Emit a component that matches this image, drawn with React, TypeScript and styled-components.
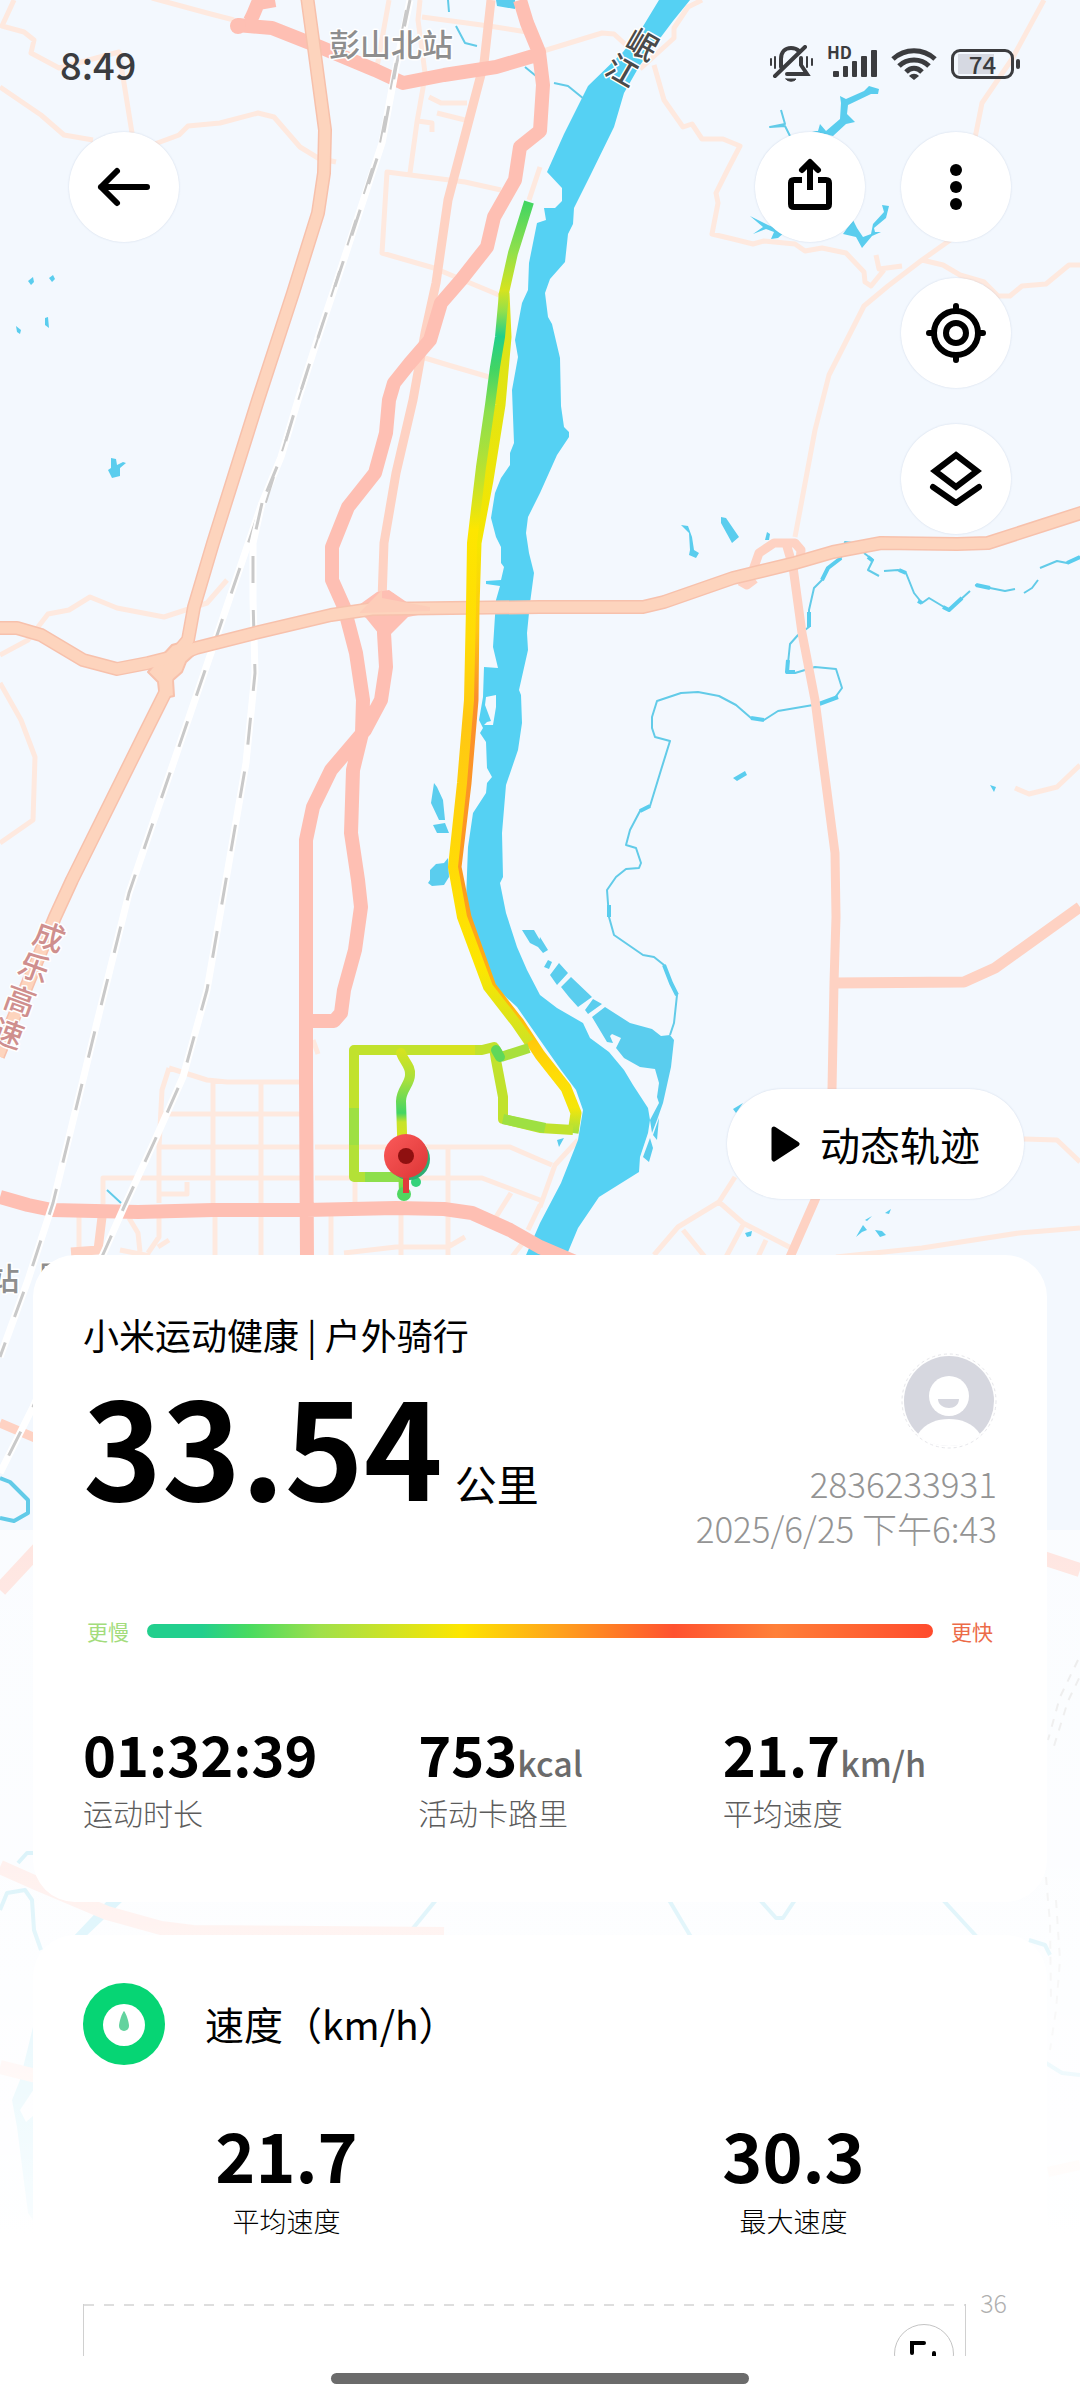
/* -------------------------------------------------------------------------- */
/*                            External Dependencies                           */
/* -------------------------------------------------------------------------- */
import React from 'react';
import styled, { createGlobalStyle } from 'styled-components';

/* -------------------------------- Map data -------------------------------- */
const minorRoads = [
  'M14 0L2 26L24 32L34 40L31 53L59 68L100 57L119 52L132 133',
  'M0 87L41 115L64 135L93 140',
  'M152 145L179 135L188 126L220 123L258 113L274 117L300 147L318 158L336 162',
  'M152 -2L207 13L234 20',
  'M389 0L377 67M420 0L418 20L425 73L423 88L417 122L410 173',
  'M422 17L489 26L527 32M429 97L441 103L467 103M437 113L465 120M418 121L432 123V132',
  'M501 190L465 182L387 172L382 253L434 268L499 295',
  'M425 358L448 365L489 377M540 167L529 200',
  'M227 580L207 603L164 617L117 608L90 597L69 610L48 614L28 640L0 655',
  'M0 683L21 720L35 757L33 820L0 843',
  'M795 537L815 430L829 375L864 306L888 286L922 260L953 238L976 133L982 103L1012 59L1044 0',
  'M922 260L943 265L960 275L984 282L998 296H1010L1022 286L1046 284L1069 265H1080',
  'M876 255L879 269L902 266',
  'M654 65L664 100L683 127L692 124L702 139H723L740 146L728 169L716 193L718 203L712 234L733 239L753 244L764 241L795 244L805 251L822 248L846 253L864 272L865 282L871 286L884 270',
  'M540 52L602 33L614 34L626 45M702 0L688 7L674 28V38L640 69',
  'M1015 788L1029 794L1057 787L1080 765',
  'M169 1068L207 1080L227 1082H300M169 1068L162 1090L159 1147V1203',
  'M159 1114H300M159 1147H300M103 1204V1178H300M213 1080V1203M261 1082V1203',
  'M160 1194H187V1182M315 1147H510L540 1160M315 1178H482L540 1200',
  'M355 1182V1203M448 1147V1203M511 1193L496 1217M540 1205L528 1230M313 1040L318 1054',
  'M79 1217V1250M129 1218L138 1233L140 1252M159 1217V1237L148 1253M169 1240L158 1247',
  'M215 1217V1255M261 1217V1255M331 1215V1255M401 1215V1255M448 1215V1255',
  'M344 1253L396 1247H448L465 1237M120 1250L150 1256',
  'M578 1140L555 1165L540 1207M540 1160L552 1165',
  'M735 1177L719 1202L678 1227L654 1255M719 1202L743 1223L795 1250',
  'M743 1225L726 1257M766 1240L758 1257M683 1230L705 1257M525 1240L512 1257',
  'M836 1257L922 1248L1019 1233L1080 1228M1024 1139L1057 1140L1080 1162',
];

const midRoads =
  'M491 0L484 63L463 143L448 200L436 283L425 333L413 400L396 473L384 543L382 600' +
  'M753 570L759 553L774 543H795L801 550L800 562M786 543L793 567L802 633L815 700L835 853L836 917L834 983L832 1090L830 1160L815 1200L790 1257' +
  'M740 581L747 585L755 579M102 1217L98 1250L71 1252M0 1423L40 1440';

const primaryRoads =
  'M275 0L258 3L253 15L250 21M237 25L272 28L320 47L375 70L403 83L444 75L496 67L540 54' +
  'M520 0L527 23L539 52L543 85L540 131L520 147L515 180L494 217L487 247L461 280L441 303L430 340L410 363L394 383L389 400L386 433L375 473L348 507L332 547V580L344 607L356 653L363 700L362 733L353 770L351 833L358 880L361 907L355 950L344 990L341 1013L334 1021H310' +
  'M387 593L384 633L386 667L381 700L365 730L331 770L313 807L306 840V1080L307 1260' +
  'M0 1197L28 1205L52 1210L138 1212L213 1210H306L396 1208L444 1209L472 1213L510 1230L540 1247L575 1262' +
  'M40 1547L0 1590M1040 1557L1080 1570M0 1867L36 1883L107 1913L161 1928L193 1932L444 1934M0 2067L40 2077';

const expressways = [
  'M307 -4L313 40L325 130L324 173L318 213L293 293L258 400L213 543L194 607L188 640L169 663L165 693L145 733L72 880L55 917L-2 1056',
  'M-4 628H17L41 635L83 660L117 669L148 663L172 657L196 648L255 633L331 615L372 609L540 607H643L664 602L733 578L795 563L833 552L881 543L957 544L988 543L1084 512',
];

const railways = [
  'M410 0L396 67L382 143L348 247L313 353L298 400L281 457L262 503L213 647L172 767L129 893L100 1010L53 1203L28 1280L0 1357',
  'M262 503L253 543V600L255 673L246 763L226 880L207 990L183 1077L155 1140L124 1207L105 1250L33 1407L0 1473',
];

const fadedRailways =
  'M1078 1660L1060 1697L1048 1740M1086 1664L1068 1701L1054 1746M1046 1877L1050 1923L1051 2000M1056 1900L1060 1960L1056 2010L1050 2050';

const river =
  'M659 0L642 28L623 52L588 86L564 134L547 172L562 188V201L555 208H544L546 220L537 223L529 263L528 290L522 303L515 340L518 357L512 390L514 443L510 453V465L501 478L495 493L491 518L496 537L501 547V563L504 567L501 580L486 581V584L500 586L496 600L493 647L498 668L484 667L483 697L479 720L483 728L480 733L486 742L487 768L492 777L487 783L486 793L473 813L468 847L466 900L468 917L480 953L495 987L517 1007L540 1040L561 1070L576 1090L583 1110L578 1140L561 1183L540 1223L523 1262' +
  'L565 1262L568 1252L578 1228L599 1197L639 1172L640 1157L648 1133L650 1120L648 1108L633 1085L624 1070L609 1052L590 1038L583 1023L557 1008L540 995L527 970L517 947L506 913L500 883L503 877L502 833L506 785L518 750L522 723L521 695L519 690L528 650L527 633L530 603L534 573L529 553L526 533L528 517L540 493L557 455L569 437V432L564 427L561 406L560 358L552 324L548 317L545 293L550 279L565 262L568 234L573 224L574 208L590 176L614 127L624 93L640 65L673 21L690 0Z' +
  'M486 697L496 695V707L493 725H484L487 722L491 721L485 705Z';

const ponds =
  'M496 0L497 6L515 9V0ZM28 281L33 277L34 282L31 285ZM49 278L53 275L55 279L52 282ZM16 326L21 330L20 334L17 332ZM45 318L48 317L49 328L45 325Z' +
  'M111 458L116 459L117 465L123 462L126 463L120 468V476L112 478L108 470L111 468Z' +
  'M434 783L437 787L443 800L445 820H439L431 803ZM433 825L445 823L449 833H437ZM448 858L444 863L436 864L430 870V880L428 883L432 886L444 885L449 877Z' +
  'M879 89L869 86L864 91L846 99L840 96L841 103L840 119L826 131L820 124L818 131L812 131L833 136L846 124L855 122L847 114L848 105L871 94H878Z' +
  'M853 220L843 234L856 237L862 248L872 236L881 232L875 232L874 228L886 218L889 206L882 205L884 212L873 224L871 234L863 237L857 228Z' +
  'M750 216L768 225L785 232L778 238L771 239L774 232L766 229L753 234L763 227Z' +
  'M681 525L688 526L692 537L694 550L699 553L696 558L689 555L690 550L689 533ZM721 517L726 518L739 537L732 543L721 523ZM767 532L770 534L769 540H765Z' +
  'M733 778L745 771L747 775L737 781ZM990 785L996 787L994 792ZM522 930L534 930L541 942L538 947L530 943ZM540 937L548 950L543 953L538 947ZM548 960L552 962L549 969L544 967Z' +
  'M559 963L568 973L557 985L550 975ZM571 977L592 997L578 1007L569 997L561 987ZM593 999L602 1004L588 1014L585 1010Z' +
  'M605 1007L630 1023L652 1029L661 1036L670 1035L674 1040L671 1067L663 1103L657 1120L652 1133L650 1120L659 1103L657 1097L659 1083L655 1069L640 1067L624 1058L616 1048L621 1038L612 1034L610 1036L613 1043L607 1042L592 1017Z' +
  'M659 1118L657 1140L653 1135ZM650 1138L653 1148L649 1162L643 1157ZM557 1140L564 1138L559 1147Z' +
  'M733 1109L743 1103L736 1113ZM745 1233L752 1231L751 1236L747 1237ZM885 1213L891 1209L889 1214ZM875 1230L882 1231L886 1235L880 1237ZM863 1225L867 1230L862 1232L856 1237L860 1230ZM865 1220L872 1216L867 1221Z' +
  'M108 1900H124L82 1940H70ZM33 2027L20 2080L12 2100L17 2127L28 2213L40 2230V2110L26 2122L20 2110L40 2080V2020Z';

const streams =
  'M448 0L449 12M456 26L465 43L477 46M525 67L536 76M554 83L568 86L584 99M781 110L785 124L770 127L785 126L790 136M107 1190L121 1203' +
  'M853 543L845 542L841 558L828 568L822 580L814 588L809 610V627L798 635L790 644L787 673H795L815 667L836 669L842 688L834 699L819 704L778 711L764 720L751 718L736 705L719 696L698 692L681 693L657 701L652 717V728L655 737L670 741L661 770L650 806L640 811L630 830L626 845L636 848L641 863L639 868L626 869L616 877L607 890L609 917L614 935L643 955L654 957L664 965L671 983L677 995L674 1023L670 1035' +
  'M864 553L873 560L868 570L879 576M884 571L898 570L906 573L914 593L922 603L929 598L949 610L970 591M975 585L1005 591L1015 589M1024 593L1032 588L1038 580M1040 568L1057 561L1067 563L1080 557';

/* The same streams swell where the water is wider */
const wideStreams =
  'M841 558L828 568L822 580M809 612V627M788 660L787 672H795M838 697L819 704M764 720L751 718M650 806L640 811M609 905L609 917M664 965L671 983L677 995M868 557L873 561M899 570L906 573M918 601L922 603M943 607L949 610L962 598M976 585L990 588M1067 563L1080 557';

const lowerStreams =
  'M0 1478L10 1482L28 1500V1513L14 1521L0 1518M18 1863L27 1853H36M0 1910L7 1893L25 1890L32 1900L34 1930L41 1950' +
  'M669 1900L691 1937M760 1900L776 1918H783L795 1900M943 1900L977 1937M436 1900L410 1932M1029 1940L1045 1945L1050 1955M1046 2063L1062 2073L1080 2075';

const trackOut =
  'M529 202L513 253L504 293L500 337L495 367L490 405L481 467L472 543L471 607L469 700L462 783L453 867L462 917L488 987L516 1023L529 1042';
const trackBack =
  'M504 293L506 337L500 405L488 480L476 543L474 607L473 700L466 783L456 867L466 917L491 987L519 1023L540 1055L566 1088L576 1113L573 1133';

const Map = () => (
  <MapCanvas viewBox="0 0 1080 2400" preserveAspectRatio="xMidYMin slice" aria-hidden="true">
    <defs>
      <linearGradient id="out" gradientUnits="userSpaceOnUse" x1="0" y1="202" x2="0" y2="1042">
        <stop offset="0" stopColor="#41d562" />
        <stop offset=".06" stopColor="#92e04b" />
        <stop offset=".105" stopColor="#d6e31f" />
        <stop offset=".13" stopColor="#92e04b" />
        <stop offset=".16" stopColor="#22cf8a" />
        <stop offset=".2" stopColor="#43d563" />
        <stop offset=".25" stopColor="#8ddf4c" />
        <stop offset=".33" stopColor="#bfe22e" />
        <stop offset=".39" stopColor="#fde600" />
        <stop offset=".52" stopColor="#ffdc06" />
        <stop offset=".62" stopColor="#ffc713" />
        <stop offset=".8" stopColor="#ffdc06" />
        <stop offset=".91" stopColor="#fde600" />
        <stop offset="1" stopColor="#d0e322" />
      </linearGradient>
      <linearGradient id="back" gradientUnits="userSpaceOnUse" x1="0" y1="293" x2="0" y2="1133">
        <stop offset="0" stopColor="#d6e31f" />
        <stop offset=".3" stopColor="#f6e600" />
        <stop offset=".4" stopColor="#ffc713" />
        <stop offset=".48" stopColor="#fb8f2c" />
        <stop offset=".7" stopColor="#fd9a20" />
        <stop offset=".85" stopColor="#ffb60f" />
        <stop offset=".93" stopColor="#ffdc06" />
        <stop offset=".97" stopColor="#f5e60a" />
        <stop offset="1" stopColor="#a3e03f" />
      </linearGradient>
      <linearGradient id="spur" gradientUnits="userSpaceOnUse" x1="0" y1="1050" x2="0" y2="1200">
        <stop offset="0" stopColor="#d6e31f" />
        <stop offset=".2" stopColor="#a8e03c" />
        <stop offset=".42" stopColor="#43d563" />
        <stop offset=".48" stopColor="#c7e32a" />
        <stop offset=".7" stopColor="#e6e514" />
        <stop offset="1" stopColor="#43d563" />
      </linearGradient>
      <linearGradient id="pin" x1="0" y1="0" x2="1" y2="1">
        <stop offset="0" stopColor="#fb5a5a" />
        <stop offset="1" stopColor="#dd3636" />
      </linearGradient>
      <linearGradient id="fade" x1="0" y1="0" x2="0" y2="1">
        <stop offset="0" stopColor="#fff" stopOpacity=".6" />
        <stop offset=".42" stopColor="#fff" stopOpacity=".76" />
        <stop offset=".7" stopColor="#fff" stopOpacity=".88" />
        <stop offset=".97" stopColor="#fff" stopOpacity=".95" />
        <stop offset="1" stopColor="#fff" />
      </linearGradient>
    </defs>
    <rect width="1080" height="2400" fill="#f3f8fe" />

    <g fill="none" strokeLinejoin="round">
      <path d={minorRoads.join('')} stroke="#fee9df" strokeWidth="5" />
      <path d={river} fill="#55d1f3" fillRule="evenodd" />
      <path d={ponds} fill="#5acdee" />
      <path d={streams} stroke="#62cbe8" strokeWidth="2" />
      <path d={wideStreams} stroke="#5acdee" strokeWidth="4" />
      <path d={lowerStreams} stroke="#62cbe8" strokeWidth="4" />
      <path d={midRoads} stroke="#fed2c3" strokeWidth="9" />
      <path d="M834 983L964 982L995 968L1080 907" stroke="#fed2c3" strokeWidth="11" />
      <path d={primaryRoads} stroke="#febfb3" strokeWidth="14" />
      <circle cx="238" cy="26" r="8" fill="#febfb3" />
      <path d="M352 610L377 592L389 590L408 603L428 607V613L408 617L391 634H379L366 618Z" fill="#febfb3" />
      {railways.map((d) => (
        <g key={d}>
          <path d={d} stroke="#fff" strokeWidth="7" />
          <path d={d} stroke="#c9c9c9" strokeWidth="3" strokeDasharray="27 27" />
        </g>
      ))}
      <path d="M406 10L380 143L296 407L262 515" stroke="#c9c9c9" strokeWidth="2" strokeDasharray="27 27" />
      <path d={fadedRailways} stroke="#c9c9c9" strokeWidth="2" strokeDasharray="8 8" />
      {expressways.map((d) => (
        <path key={d} d={d} stroke="#f7c1ac" strokeWidth="14" />
      ))}
      <path d="M162 656L172 645L190 640L197 652L186 662L182 672L173 680L174 696L160 699L158 682L148 672Z" fill="#fdd4bd" stroke="#f7c1ac" strokeWidth="2" />
      {expressways.map((d) => (
        <path key={d} d={d} stroke="#fdd4bd" strokeWidth="11" />
      ))}
      <path d="M360 612L382 590V598L430 607V611L360 613Z" fill="#fdcdb9" />
      <path d="M1048 2172L1080 2165" stroke="#fdd4bd" strokeWidth="10" />
    </g>

    <g fill="none" strokeWidth="10" strokeLinejoin="round">
      <path d={trackBack} stroke="url(#back)" strokeWidth="11" />
      <path d={trackOut} stroke="url(#out)" />
      <path d="M573 1130L540 1128L503 1119V1097L496 1060L494 1048" stroke="#c1e22d" />
      <path d="M503 1119L545 1128" stroke="#9ee042" />
      <path d="M529 1048L501 1057" stroke="#a8e03c" />
      <path d="M501 1058L494 1047L482 1050H354V1110" stroke="#c1e22d" />
      <path d="M500 1057L496 1050" stroke="#5fd85a" strokeLinecap="round" />
      <path d="M430 1050H475" stroke="#d6e31f" />
      <path d="M354 1108V1150" stroke="#9ee042" />
      <path d="M354 1145V1177H401" stroke="#b3e137" />
      <path d="M365 1177H404" stroke="#8ddf4c" />
      <path d="M401 1053C404 1062 411 1066 410 1075C410 1084 401 1090 401 1101L402 1133L404 1194" stroke="url(#spur)" strokeLinecap="round" />
      <circle cx="404" cy="1194" r="7" fill="#4fd760" />
      <circle cx="416" cy="1182" r="5" fill="#35d27c" />
    </g>
    <circle cx="409" cy="1159" r="21" fill="#2fae74" />
    <path d="M406 1174V1193" stroke="#e03c3c" strokeWidth="6" />
    <circle cx="406" cy="1156" r="22" fill="url(#pin)" />
    <circle cx="406" cy="1156" r="8" fill="#8f1010" />

    <MapLabel x="391" y="56">彭山北站</MapLabel>
    <MapLabel $color="#4a4a4a" transform="translate(642 45) rotate(30)" y="11">岷</MapLabel>
    <MapLabel $color="#4a4a4a" transform="translate(622 71) rotate(30)" y="11">江</MapLabel>
    <MapLabel $color="#cf8f8e" transform="translate(49 937) rotate(20)" y="11">成</MapLabel>
    <MapLabel $color="#cf8f8e" transform="translate(34 968) rotate(20)" y="11">乐</MapLabel>
    <MapLabel $color="#cf8f8e" transform="translate(20 1001) rotate(20)" y="11">高</MapLabel>
    <MapLabel $color="#cf8f8e" transform="translate(8 1034) rotate(20)" y="11">速</MapLabel>
    <MapLabel x="4" y="1290">站</MapLabel>
    <MapLabel x="53" y="1288">眉</MapLabel>

    <rect y="1530" width="1080" height="704" fill="url(#fade)" />
    <rect y="2234" width="1080" height="166" fill="#fff" />
  </MapCanvas>
);

/* ---------------------------------- Icons --------------------------------- */
const MutedBell = () => (
  <svg width="44" height="38" viewBox="0 0 44 38" fill="none" stroke="#3b3c3f" strokeWidth="4" strokeLinecap="round">
    <path d="M12 22V14C12 7 16 3 22 3C25 3 28 4 30 6M32 13V20L38 29H18" />
    <path d="M36 2L6 31" />
    <path d="M2 14V20M6 12V23M38 12V22M43 14V20" strokeWidth="2" />
    <path d="M17 34H27C25 37 19 37 17 34Z" fill="#3b3c3f" strokeWidth="1" />
  </svg>
);

const SignalBars = () => (
  <svg width="44" height="28" viewBox="0 0 44 28" fill="#3b3c3f">
    <rect x="0" y="21" width="6" height="6" rx="1" />
    <rect x="10" y="16" width="5" height="11" rx="1" />
    <rect x="19" y="11" width="5" height="16" rx="1" />
    <rect x="28" y="6" width="6" height="21" rx="1" />
    <rect x="38" y="0" width="6" height="27" rx="1" />
  </svg>
);

const Wifi = () => (
  <svg width="46" height="34" viewBox="0 0 46 34" fill="none" stroke="#3b3c3f" strokeWidth="5">
    <path d="M2 12C14 1 32 1 44 12" />
    <path d="M8 19C16 11 30 11 38 19" />
    <path d="M15 25C20 20 26 20 31 25" />
    <path d="M18 29C21 26 25 26 28 29L23 33Z" fill="#3b3c3f" stroke="none" />
  </svg>
);

const BackIcon = () => (
  <svg width="56" height="44" viewBox="0 0 56 44" fill="none" stroke="#000" strokeWidth="6" strokeLinecap="round" strokeLinejoin="round">
    <path d="M51 22H5M21 6L5 22L21 38" />
  </svg>
);

const ShareIcon = () => (
  <svg width="60" height="60" viewBox="0 0 60 60" fill="none" stroke="#000" strokeWidth="6">
    <path d="M22 23H14Q11 23 11 26V47Q11 50 14 50H46Q49 50 49 47V26Q49 23 46 23H38" />
    <path d="M30 33V5" />
    <path d="M22 13L30 5L38 13" strokeLinecap="round" strokeLinejoin="round" />
  </svg>
);

const MoreIcon = () => (
  <svg width="12" height="46" viewBox="0 0 12 46">
    <circle cx="6" cy="6" r="6" />
    <circle cx="6" cy="23" r="6" />
    <circle cx="6" cy="40" r="6" />
  </svg>
);

const LocateIcon = () => (
  <svg width="60" height="60" viewBox="0 0 60 60" fill="none" stroke="#000" strokeWidth="6">
    <circle cx="30" cy="30" r="22" />
    <circle cx="30" cy="30" r="10" />
    <path d="M30 3V8M30 52V57M3 30H8M52 30H57" strokeLinecap="round" />
  </svg>
);

const LayersIcon = () => (
  <svg width="56" height="60" viewBox="0 0 56 60" fill="none" stroke="#000" strokeWidth="6">
    <path d="M28 6L49 22L28 38L7 22Z" />
    <path d="M5 38L28 54L51 38" strokeLinecap="round" strokeLinejoin="round" />
  </svg>
);

const PlayIcon = () => (
  <svg width="29" height="36" viewBox="0 0 29 36">
    <path d="M3 3L26 18L3 33Z" stroke="#000" strokeWidth="5" strokeLinejoin="round" />
  </svg>
);

const AvatarIcon = () => (
  <svg width="96" height="96" viewBox="0 0 96 96">
    <circle cx="48" cy="48" r="47" fill="#fff" stroke="#e6e6ea" strokeDasharray="3 3" />
    <circle cx="48" cy="48" r="45" fill="#d6d7df" />
    <path d="M17 81C24 70 36 66 48 66S72 70 79 81C72 89 60 93 48 93S24 89 17 81Z" fill="#fff" />
    <circle cx="48" cy="43" r="20" fill="#fff" />
    <path d="M37 46H58C58 52 53 55 48 55S37 52 37 46Z" fill="#d6d7df" />
  </svg>
);

const GaugeIcon = () => (
  <svg width="83" height="83" viewBox="0 0 83 83">
    <circle cx="41" cy="41" r="41" fill="#06d574" />
    <circle cx="41" cy="42" r="21" fill="#fff" />
    <path d="M41 28C43 30 46 39 46 43A5 5 0 0 1 36 43C36 39 39 30 41 28Z" fill="#62d39e" />
  </svg>
);

const ExpandIcon = () => (
  <svg width="32" height="32" viewBox="0 0 32 32" fill="none" stroke="#000" strokeWidth="4" strokeLinecap="round">
    <path d="M4 15V5H16M26 15V28H14" />
  </svg>
);

const stats = [
  { value: '01:32:39', unit: '', label: '运动时长' },
  { value: '753', unit: 'kcal', label: '活动卡路里' },
  { value: '21.7', unit: 'km/h', label: '平均速度' },
];

const speeds = [
  { value: '21.7', label: '平均速度' },
  { value: '30.3', label: '最大速度' },
];

const App = () => {
  return (
    <Page>
      <GlobalStyle />
      <Map />
      <Hero>
        <StatusBar>
          <Clock>8:49</Clock>
          <StatusIcons>
            <MutedBell />
            <Signal>
              <SignalBars />
              <Hd>HD</Hd>
            </Signal>
            <Wifi />
            <Battery>74</Battery>
          </StatusIcons>
        </StatusBar>

        <Toolbar>
          <RoundButton aria-label="返回">
            <BackIcon />
          </RoundButton>
          <Actions>
            <ActionRow>
              <RoundButton aria-label="分享">
                <ShareIcon />
              </RoundButton>
              <RoundButton aria-label="更多">
                <MoreIcon />
              </RoundButton>
            </ActionRow>
            <RoundButton aria-label="定位">
              <LocateIcon />
            </RoundButton>
            <RoundButton aria-label="图层">
              <LayersIcon />
            </RoundButton>
          </Actions>
        </Toolbar>

        <TrackButton>
          <PlayIcon />
          动态轨迹
        </TrackButton>
      </Hero>

      <Sheet>
        <Card>
          <Summary>
            <div>
              <Title>小米运动健康 | 户外骑行</Title>
              <Distance>
                33.54<small>公里</small>
              </Distance>
            </div>
            <Owner>
              <AvatarIcon />
              <span>2836233931</span>
              <span>2025/6/25 下午6:43</span>
            </Owner>
          </Summary>

          <Scale>
            <ScaleLabel $color="#a3dc7c">更慢</ScaleLabel>
            <ScaleBar />
            <ScaleLabel $color="#ec6b48">更快</ScaleLabel>
          </Scale>

          <Stats>
            {stats.map((item) => (
              <div key={item.label}>
                <StatValue>
                  {item.value}
                  <small>{item.unit}</small>
                </StatValue>
                <StatLabel>{item.label}</StatLabel>
              </div>
            ))}
          </Stats>
        </Card>

        <SpeedCard>
          <CardHeader>
            <GaugeIcon />
            <h2>速度（km/h）</h2>
          </CardHeader>
          <Speeds>
            {speeds.map((item) => (
              <div key={item.label}>
                <SpeedValue>{item.value}</SpeedValue>
                <SpeedLabel>{item.label}</SpeedLabel>
              </div>
            ))}
          </Speeds>
          <Chart>
            <Plot>
              <ExpandButton aria-label="全屏">
                <ExpandIcon />
              </ExpandButton>
            </Plot>
            <AxisLabel>36</AxisLabel>
          </Chart>
        </SpeedCard>
      </Sheet>
      <HomeBar />
    </Page>
  );
};

const GlobalStyle = createGlobalStyle`
  * {
    box-sizing: border-box;
  }
  body {
    margin: 0;
    background: #fff;
    color: #000;
    font-family: 'Noto Sans CJK SC', sans-serif;
  }
  h1, h2, p {
    margin: 0;
    font-weight: 400;
  }
  small {
    line-height: 1;
  }
  button {
    border: 0;
    padding: 0;
    background: #fff;
    color: #000;
    font-family: inherit;
  }
  svg {
    display: block;
    flex: none;
  }
`;

const Page = styled.main`
  position: relative;
  display: flex;
  flex-direction: column;
  min-height: 100vh;
  overflow: hidden;
`;

/* The map lies under the whole page */
const MapCanvas = styled.svg`
  position: absolute;
  inset: 0;
  width: 100%;
  height: 100%;
`;

const MapLabel = styled.text<{ $color?: string }>`
  fill: ${(p) => p.$color || '#8e8e8e'};
  stroke: #fff;
  stroke-width: 3px;
  stroke-linejoin: round;
  paint-order: stroke;
  font-size: 31px;
  font-weight: 500;
  text-anchor: middle;
`;

const Hero = styled.section`
  position: relative;
  flex: 1;
  display: flex;
  flex-direction: column;
`;

const StatusBar = styled.header`
  display: flex;
  align-items: center;
  justify-content: space-between;
  height: 132px;
  padding: 0 60px 4px;
`;

const Clock = styled.time`
  font-size: 38px;
  font-weight: 500;
  line-height: 40px;
  color: #3b3c3f;
`;

const StatusIcons = styled.div`
  display: flex;
  align-items: center;
  gap: 14px;
`;

const Signal = styled.div`
  position: relative;
  padding-left: 6px;
`;

const Hd = styled.span`
  position: absolute;
  top: -6px;
  left: 0;
  font-size: 17px;
  font-weight: 700;
  line-height: 16px;
  color: #3b3c3f;
`;

const Battery = styled.div`
  position: relative;
  width: 63px;
  height: 30px;
  margin-right: 6px;
  border: 3px solid #3b3c3f;
  border-radius: 9px;
  background: linear-gradient(#d6d9e2, #d6d9e2) 4px 2px / 36px 20px no-repeat;
  color: #3b3c3f;
  font-size: 24px;
  font-weight: 500;
  line-height: 24px;
  text-align: center;

  &:after {
    content: '';
    position: absolute;
    top: 7px;
    right: -9px;
    width: 4px;
    height: 10px;
    border-radius: 2px;
    background: #3b3c3f;
  }
`;

const Toolbar = styled.nav`
  display: flex;
  align-items: flex-start;
  justify-content: space-between;
  padding: 0 69px;
`;

const Actions = styled.div`
  display: flex;
  flex-direction: column;
  align-items: flex-end;
  gap: 36px;
`;

const ActionRow = styled.div`
  display: flex;
  gap: 36px;
`;

const RoundButton = styled.button`
  display: flex;
  align-items: center;
  justify-content: center;
  width: 110px;
  height: 110px;
  border-radius: 50%;
  box-shadow: 0 0 2px rgba(60, 90, 140, 0.2);
`;

const TrackButton = styled.button`
  display: flex;
  align-items: center;
  align-self: flex-end;
  gap: 20px;
  height: 110px;
  margin: auto 56px 56px 0;
  padding: 0 44px;
  border-radius: 55px;
  box-shadow: 0 0 2px rgba(60, 90, 140, 0.2);
  font-size: 40px;
`;

const Sheet = styled.section`
  position: relative;
  display: flex;
  flex-direction: column;
  gap: 33px;
  padding: 0 33px;
`;

const Card = styled.article`
  padding: 55px 50px 70px;
  border-radius: 42px;
  background: #fff;
`;

const Summary = styled.div`
  display: flex;
  justify-content: space-between;
`;

const Title = styled.h1`
  font-size: 36px;
  line-height: 48px;
`;

const Distance = styled.p`
  margin-top: 13px;
  font-size: 134px;
  font-weight: 700;
  line-height: 144px;

  small {
    margin-left: 12px;
    font-size: 42px;
    font-weight: 400;
  }
`;

const Owner = styled.div`
  display: flex;
  flex-direction: column;
  align-items: flex-end;
  padding-top: 43px;
  color: #949494;
  font-size: 35px;
  font-weight: 300;
  line-height: 45px;

  svg {
    margin-bottom: 11px;
  }
`;

const Scale = styled.div`
  display: flex;
  align-items: center;
  gap: 18px;
  margin-top: 66px;
  padding: 0 4px;
`;

const ScaleLabel = styled.span<{ $color: string }>`
  color: ${(p) => p.$color};
  font-size: 21px;
  line-height: 30px;
`;

const ScaleBar = styled.div`
  flex: 1;
  height: 14px;
  border-radius: 7px;
  background: linear-gradient(
    90deg,
    #22cf8d 7%,
    #48db60 13%,
    #a0e04a 22%,
    #fde600 40%,
    #ffa41c 52%,
    #ff5230 67%,
    #ff8038 80%,
    #ff4b2d
  );
`;

const Stats = styled.div`
  display: grid;
  grid-template-columns: 11fr 10fr 9fr;
  margin-top: 77px;
`;

const StatValue = styled.p`
  font-size: 56px;
  font-weight: 700;
  line-height: 60px;

  small {
    color: #6b6b6b;
    font-size: 34px;
    font-weight: 500;
  }
`;

const StatLabel = styled.p`
  margin-top: 9px;
  color: #5c5c5c;
  font-size: 30px;
  font-weight: 300;
  line-height: 40px;
`;

const SpeedCard = styled.article`
  padding-top: 48px;
  border-radius: 42px 42px 0 0;
  background: #fff;
`;

const CardHeader = styled.div`
  display: flex;
  align-items: center;
  gap: 39px;
  padding: 0 50px;

  h2 {
    padding-bottom: 4px;
    font-size: 39px;
    line-height: 48px;
  }
`;

const Speeds = styled.div`
  display: grid;
  grid-template-columns: 1fr 1fr;
  margin-top: 52px;
  text-align: center;
`;

const SpeedValue = styled.p`
  font-size: 68px;
  font-weight: 700;
  line-height: 72px;
`;

const SpeedLabel = styled.p`
  margin-top: 16px;
  font-size: 27px;
  font-weight: 300;
  line-height: 30px;
`;

/* Only the top of the chart shows above the home bar */
const Chart = styled.div`
  display: flex;
  gap: 14px;
  height: 69px;
  margin-top: 51px;
  padding: 0 40px 0 50px;
`;

const Plot = styled.div`
  position: relative;
  flex: 1;
  margin-top: 17px;
  border: solid #d0d0d0;
  border-width: 0 1px;
  background: repeating-linear-gradient(90deg, #dedede 0 10px, transparent 10px 20px) top / 100% 2px no-repeat;
  overflow: hidden;
`;

const ExpandButton = styled.button`
  position: absolute;
  top: 20px;
  right: 11px;
  display: flex;
  align-items: center;
  justify-content: center;
  width: 60px;
  height: 60px;
  border: 1px solid #c4c4c4;
  border-radius: 50%;
`;

const AxisLabel = styled.span`
  color: #b0b0b0;
  font-size: 25px;
  font-weight: 300;
  line-height: 30px;
`;

const HomeBar = styled.footer`
  position: relative;
  height: 44px;
  background: #fff;

  &:before {
    content: '';
    display: block;
    width: 418px;
    height: 11px;
    margin: 17px auto 0;
    border-radius: 6px;
    background: #6b6b6b;
  }
`;

export default App;
